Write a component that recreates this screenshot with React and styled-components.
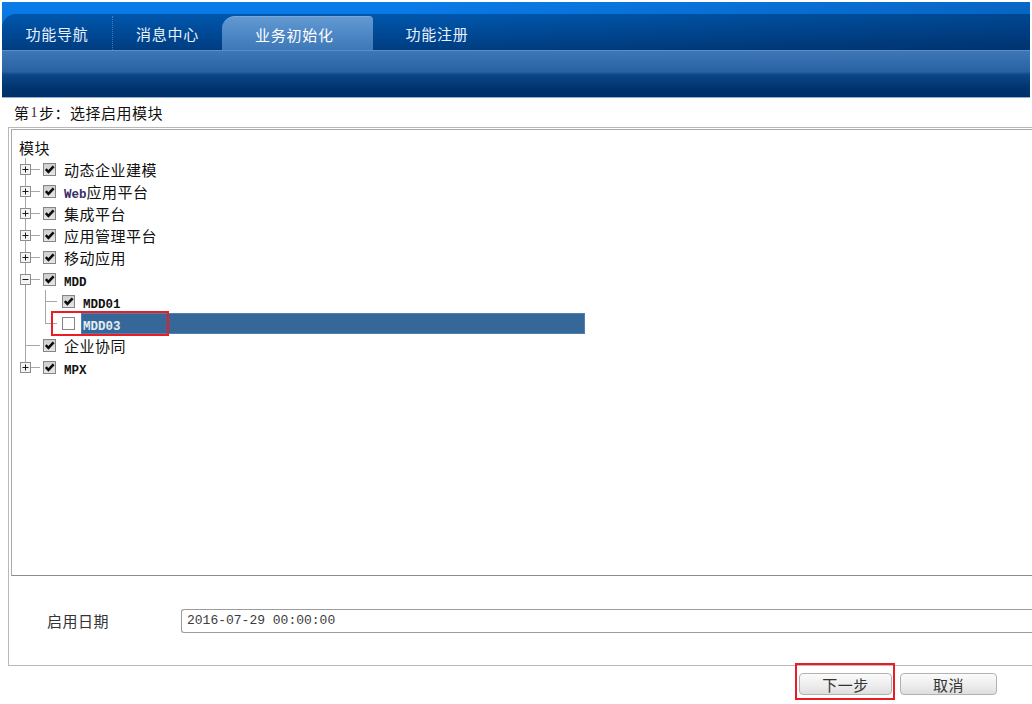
import styled, { createGlobalStyle } from "styled-components"

const GlobalStyle = createGlobalStyle`
  html, body {
    margin: 0;
    padding: 0;
    background: #fff;
  }
  body {
    font-family: "Noto Sans CJK SC", "Noto Sans", sans-serif;
    color: #000;
  }
`

const tabs = [
    { label: "功能导航", w: 111, sep: true },
    { label: "消息中心", w: 109 },
    { label: "业务初始化", w: 151, active: true },
    { label: "功能注册", w: 128 },
]

const Plus = ({ open }) => (
    <svg width="11" height="11" viewBox="0 0 11 11">
        <rect x="0.5" y="0.5" width="10" height="10" fill="#f4f4f4" stroke="#8d8d8d" />
        <line x1="2.5" y1="5.5" x2="8.5" y2="5.5" stroke="#1a1a1a" />
        {!open && <line x1="5.5" y1="2.5" x2="5.5" y2="8.5" stroke="#1a1a1a" />}
    </svg>
)

const Check = ({ checked }) => (
    <CheckBox $checked={checked}>
        {checked && (
            <svg width="11" height="11" viewBox="0 0 11 11">
                <path d="M1.8 5.2 L4.4 7.8 L9.6 2.4" fill="none" stroke="#0d0d0d" strokeWidth="2.6" />
            </svg>
        )}
    </CheckBox>
)

const App = () => {
    return (
        <Page>
            <GlobalStyle />
            <Header>
                <TabBar>
                    <TabStrip>
                        {tabs.map((t) => (
                            <Tab key={t.label} $w={t.w} $active={t.active} $sep={t.sep}>
                                {t.label}
                            </Tab>
                        ))}
                    </TabStrip>
                </TabBar>
                <SubBar />
            </Header>

            <StepTitle>
                第<Num>1</Num>步：选择启用模块
            </StepTitle>

            <Panel>
                <TreeBox>
                    <HeadRow>模块</HeadRow>

                    <TreeRow>
                        <Gutter $stub={15}><Plus /></Gutter>
                        <Check checked />
                        <Label>动态企业建模</Label>
                    </TreeRow>
                    <TreeRow>
                        <Gutter $stub={15}><Plus /></Gutter>
                        <Check checked />
                        <Label><Mono $web>Web</Mono>应用平台</Label>
                    </TreeRow>
                    <TreeRow>
                        <Gutter $stub={15}><Plus /></Gutter>
                        <Check checked />
                        <Label>集成平台</Label>
                    </TreeRow>
                    <TreeRow>
                        <Gutter $stub={15}><Plus /></Gutter>
                        <Check checked />
                        <Label>应用管理平台</Label>
                    </TreeRow>
                    <TreeRow>
                        <Gutter $stub={15}><Plus /></Gutter>
                        <Check checked />
                        <Label>移动应用</Label>
                    </TreeRow>
                    <TreeRow>
                        <Gutter $stub={15}><Plus open /></Gutter>
                        <Check checked />
                        <Label><Mono>MDD</Mono></Label>
                    </TreeRow>
                    <TreeRow>
                        <Gutter $mr={9} />
                        <Gutter $stub={12} $mr={11} />
                        <Check checked />
                        <Label><Mono>MDD01</Mono></Label>
                    </TreeRow>
                    <TreeRow>
                        <Gutter $mr={9} />
                        <Gutter $stub={12} $mr={11} $last />
                        <Check />
                        <Label $selected><Mono>MDD03</Mono></Label>
                        <Mark $left={39} $top={-1} $width={118} $height={25} />
                    </TreeRow>
                    <TreeRow>
                        <Gutter $stub={15} />
                        <Check checked />
                        <Label>企业协同</Label>
                    </TreeRow>
                    <TreeRow>
                        <Gutter $stub={15} $last><Plus /></Gutter>
                        <Check checked />
                        <Label><Mono>MPX</Mono></Label>
                    </TreeRow>
                </TreeBox>

                <DateRow>
                    <DateLabel>启用日期</DateLabel>
                    <DateInput>2016-07-29 00:00:00</DateInput>
                </DateRow>
            </Panel>

            <Actions>
                <ButtonWrap>
                    <Button $w={93}>下一步</Button>
                    <Mark $inset />
                </ButtonWrap>
                <Button $w={97}>取消</Button>
            </Actions>
        </Page>
    )
}

const Page = styled.div`
    width: 1032px;
    height: 704px;
    overflow: hidden;
    padding-top: 2px;
    box-sizing: border-box;
`;

const Header = styled.div`
    margin: 0 2px;
    height: 96px;
    display: flex;
    flex-direction: column;
`;

const TabBar = styled.div`
    height: 48px;
    background:
        linear-gradient(90deg, rgba(0, 0, 0, 0) 40%, rgba(0, 20, 60, 0.2) 100%),
        linear-gradient(180deg, #0b7ce9 0%, #006cd6 100%);
`;

const TabStrip = styled.div`
    margin-top: 12px;
    height: 36px;
    display: flex;
    align-items: flex-end;
    border-top-left-radius: 14px;
    background:
        linear-gradient(90deg, rgba(0, 0, 0, 0) 45%, rgba(0, 16, 50, 0.22) 100%),
        linear-gradient(180deg, #0057ad 0%, #004b99 45%, #003d80 100%);
`;

const Tab = styled.div`
    width: ${(p) => p.$w}px;
    height: 34px;
    flex: none;
    box-sizing: border-box;
    display: flex;
    align-items: center;
    justify-content: center;
    padding-top: 1px;
    font-size: 15px;
    letter-spacing: 0.75px;
    color: #e9f1ff;
    border-right: ${(p) => (p.$sep ? "1px dotted rgba(120, 160, 215, 0.55)" : "none")};
    ${(p) =>
        p.$active &&
        `
        color: #fff;
        padding-right: 6px;
        border-radius: 13px 4px 0 0;
        border-top: 1px solid #7aa7da;
        background: linear-gradient(180deg, #6299d2 0%, #4d86c4 55%, #3e78b8 100%);
    `}
`;

const SubBar = styled.div`
    flex: 1;
    border-top: 1px solid #5b8dc7;
    border-bottom: 1px solid #93afd2;
    background: linear-gradient(180deg, #3d77b7 0%, #2862a3 45%, #0d4686 52%, #00346f 80%, #002f68 100%);
`;

const StepTitle = styled.div`
    height: 29px;
    padding-left: 14px;
    display: flex;
    align-items: center;
    font-size: 15px;
    letter-spacing: 0.5px;
    color: #111;
`;

const Num = styled.span`
    font-family: "Liberation Serif", serif;
    font-size: 14px;
    color: #3a1a3a;
    margin: 0 1px;
`;

const Panel = styled.div`
    margin-left: 8px;
    width: 1040px;
    height: 539px;
    box-sizing: border-box;
    border: 1px solid #b8b8b8;
    display: flex;
    flex-direction: column;
`;

const TreeBox = styled.div`
    margin: 1px 0 0 2px;
    height: 447px;
    box-sizing: border-box;
    border: 1px solid #a9a9a9;
    border-bottom-color: #8c8c8c;
    border-right: none;
    padding-top: 6px;
`;

const HeadRow = styled.div`
    height: 22px;
    padding-left: 7px;
    display: flex;
    align-items: center;
    font-size: 15px;
    letter-spacing: 0.5px;
    color: #111;
`;

const TreeRow = styled.div`
    position: relative;
    height: 22px;
    padding-left: 8px;
    display: flex;
    align-items: center;
`;

const Gutter = styled.span`
    position: relative;
    flex: none;
    width: 11px;
    height: 22px;
    margin-right: ${(p) => p.$mr ?? 12}px;
    display: flex;
    align-items: center;
    justify-content: center;

    &::before {
        content: "";
        position: absolute;
        left: 5px;
        top: 0;
        bottom: ${(p) => (p.$last ? "11px" : "0")};
        width: 1px;
        background: #a6a6a6;
    }

    &::after {
        content: "";
        display: ${(p) => (p.$stub ? "block" : "none")};
        position: absolute;
        left: 5px;
        top: 11px;
        width: ${(p) => p.$stub || 0}px;
        height: 1px;
        background: #a6a6a6;
    }

    svg {
        position: relative;
        z-index: 1;
    }
`;

const CheckBox = styled.span`
    flex: none;
    width: 13px;
    height: 13px;
    box-sizing: border-box;
    border: 1px solid #858585;
    background: ${(p) => (p.$checked ? "linear-gradient(180deg, #cfcfcf, #e6e6e6)" : "#fff")};
    display: inline-flex;
    align-items: center;
    justify-content: center;
    margin-right: 8px;
`;

const Label = styled.span`
    font-size: 15px;
    letter-spacing: 0.5px;
    color: #111;
    white-space: nowrap;
    ${(p) =>
        p.$selected &&
        `
        margin-left: -2px;
        padding-left: 2px;
        width: 502px;
        height: 21px;
        line-height: 21px;
        background: #356898;
        color: #e4ecf6;
        box-shadow: inset 0 0 0 1px #4f7fae;
    `}
`;

const Mono = styled.span`
    font-family: "Liberation Mono", monospace;
    font-weight: 700;
    font-size: 12.5px;
    letter-spacing: 0;
    color: ${(p) => (p.$web ? "#3b2a6a" : "inherit")};
`;

const Mark = styled.span`
    position: absolute;
    box-sizing: border-box;
    border: 2px solid #ea1c24;
    pointer-events: none;
    ${(p) =>
        p.$inset
            ? `
        top: -10px;
        left: -4px;
        right: -3px;
        bottom: -5px;
    `
            : `
        left: ${p.$left}px;
        top: ${p.$top}px;
        width: ${p.$width}px;
        height: ${p.$height}px;
    `}
`;

const DateRow = styled.div`
    flex: 1;
    display: flex;
    align-items: center;
    padding-left: 38px;
`;

const DateLabel = styled.span`
    width: 134px;
    flex: none;
    font-size: 15px;
    letter-spacing: 0.5px;
    color: #333;
`;

const DateInput = styled.div`
    flex: 1;
    height: 24px;
    box-sizing: border-box;
    border: 1px solid #9c9c9c;
    border-right: none;
    border-radius: 3px 0 0 3px;
    padding-left: 5px;
    display: flex;
    align-items: center;
    font-family: "Liberation Mono", monospace;
    font-size: 13px;
    color: #3c3c3c;
`;

const Actions = styled.div`
    display: flex;
    justify-content: flex-end;
    gap: 8px;
    padding-right: 35px;
    margin-top: 7px;
`;

const ButtonWrap = styled.div`
    position: relative;
    display: flex;
`;

const Button = styled.button`
    width: ${(p) => p.$w}px;
    height: 22px;
    padding: 0;
    box-sizing: border-box;
    border: 1px solid #b2b2b2;
    border-radius: 4px;
    background: linear-gradient(180deg, #fbfbfb 0%, #ececec 60%, #dedede 100%);
    font-family: "Noto Sans CJK SC", sans-serif;
    font-size: 15px;
    letter-spacing: 0.5px;
    color: #333;
    display: flex;
    align-items: center;
    justify-content: center;
`;

export default App;
